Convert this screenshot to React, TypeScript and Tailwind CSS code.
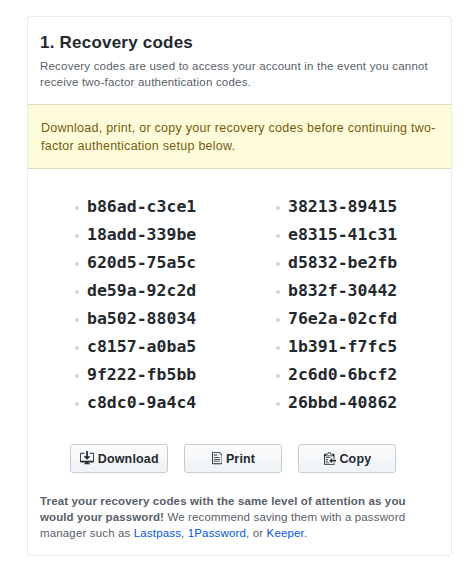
const leftCodes = ["b86ad-c3ce1", "18add-339be", "620d5-75a5c", "de59a-92c2d", "ba502-88034", "c8157-a0ba5", "9f222-fb5bb", "c8dc0-9a4c4"];
const rightCodes = ["38213-89415", "e8315-41c31", "d5832-be2fb", "b832f-30442", "76e2a-02cfd", "1b391-f7fc5", "2c6d0-6bcf2", "26bbd-40862"];

const actions = [
  {
    label: "Download",
    width: 16,
    path: "M4 6h3V0h2v6h3l-4 4-4-4zm11-4h-4v1h4v8H1V3h4V2H1c-.55 0-1 .45-1 1v9c0 .55.45 1 1 1h5.34c-.25.61-.86 1.39-2.34 2h8c-1.48-.61-2.09-1.39-2.34-2H15c.55 0 1-.45 1-1V3c0-.55-.45-1-1-1z",
  },
  {
    label: "Print",
    width: 12,
    path: "M6 5H2V4h4v1zM2 8h7V7H2v1zm0 2h7V9H2v1zm0 2h7v-1H2v1zm10-7.5V14c0 .55-.45 1-1 1H1c-.55 0-1-.45-1-1V2c0-.55.45-1 1-1h7.5L12 4.5zM11 5L8 2H1v12h10V5z",
  },
  {
    label: "Copy",
    width: 14,
    path: "M2 13h4v1H2v-1zm5-6H2v1h5V7zm2 3V8l-3 3 3 3v-2h5v-2H9zM4.5 9H2v1h2.5V9zM2 12h2.5v-1H2v1zm9 1h1v2c-.02.28-.11.52-.3.7-.19.18-.42.28-.7.3H1c-.55 0-1-.45-1-1V4c0-.55.45-1 1-1h3c0-1.11.89-2 2-2 1.11 0 2 .89 2 2h3c.55 0 1 .45 1 1v5h-1V6H1v9h10v-2zM2 5h8c0-.55-.45-1-1-1H8c-.55 0-1-.45-1-1s-.45-1-1-1-1 .45-1 1-.45 1-1 1H3c-.55 0-1 .45-1 1z",
  },
];

function CodeList({ codes }: { codes: string[] }) {
  return (
    <ul className="w-[201px] shrink-0">
      {codes.map((code) => (
        <li key={code} className="flex h-7 items-center">
          <span className="mr-2 mt-px size-1 rounded-full bg-[#d5d8da]" />
          <span className="font-['DejaVu_Sans_Mono',monospace] text-[16.5px] font-bold leading-7 text-[#24292e]">{code}</span>
        </li>
      ))}
    </ul>
  );
}

export default function App() {
  return (
    <div className="h-[573px] w-[474px] bg-white pl-[27px] pt-4 font-['Liberation_Sans',Arial,sans-serif]">
      <section className="flex h-[540px] w-[425px] flex-col rounded-[3px] border border-[#eaebec]">
        <header className="h-[87px] whitespace-nowrap pl-3 pt-[15px]">
          <h1 className="text-[17px] font-bold leading-[22px] tracking-[0.22px] text-[#24292e]">1. Recovery codes</h1>
          <p className="mt-1 text-[11.5px] leading-4 tracking-[0.21px] text-[#586069]">
            Recovery codes are used to access your account in the event you cannot
            <br />
            receive two-factor authentication codes.
          </p>
        </header>
        <div className="h-[65px] whitespace-nowrap border-y border-[#dfdcb9] bg-[#fffcda] pl-[13px] pt-[14px] text-[12.5px] leading-[18px] tracking-[0.26px] text-[#735c0f]">
          Download, print, or copy your recovery codes before continuing two-
          <br />
          factor authentication setup below.
        </div>
        <div className="mt-6 flex pl-[47px]">
          <CodeList codes={leftCodes} />
          <CodeList codes={rightCodes} />
        </div>
        <div className="mt-[27px] flex gap-4 pl-[42px]">
          {actions.map((action) => (
            <button
              key={action.label}
              className="flex h-[29px] w-[98px] items-center justify-center rounded-[3px] border border-[#c9cccf] bg-linear-to-b from-[#fafbfc] to-[#eff3f6] pl-px text-[12.5px] font-bold tracking-[0.15px] text-[#24292e]"
            >
              <svg className="-mt-0.5 mr-[3.5px] h-3.5 shrink-0" viewBox={`0 0 ${action.width} 16`} fill="currentColor">
                <path d={action.path} />
              </svg>
              <span className="pt-0.5">{action.label}</span>
            </button>
          ))}
        </div>
        <p className="mt-5 whitespace-nowrap pl-3 text-[11.5px] leading-4 tracking-[0.15px] text-[#586069]">
          <strong className="tracking-[0.14px]">Treat your recovery codes with the same level of attention as you</strong>
          <br />
          <strong className="tracking-[0.1px]">would your password!</strong> We recommend saving them with a password
          <br />
          manager such as <a className="text-[#0356e8]">Lastpass</a>, <a className="text-[#0356e8]">1Password</a>, or{" "}
          <a className="text-[#0356e8]">Keeper</a>.
        </p>
      </section>
    </div>
  );
}
